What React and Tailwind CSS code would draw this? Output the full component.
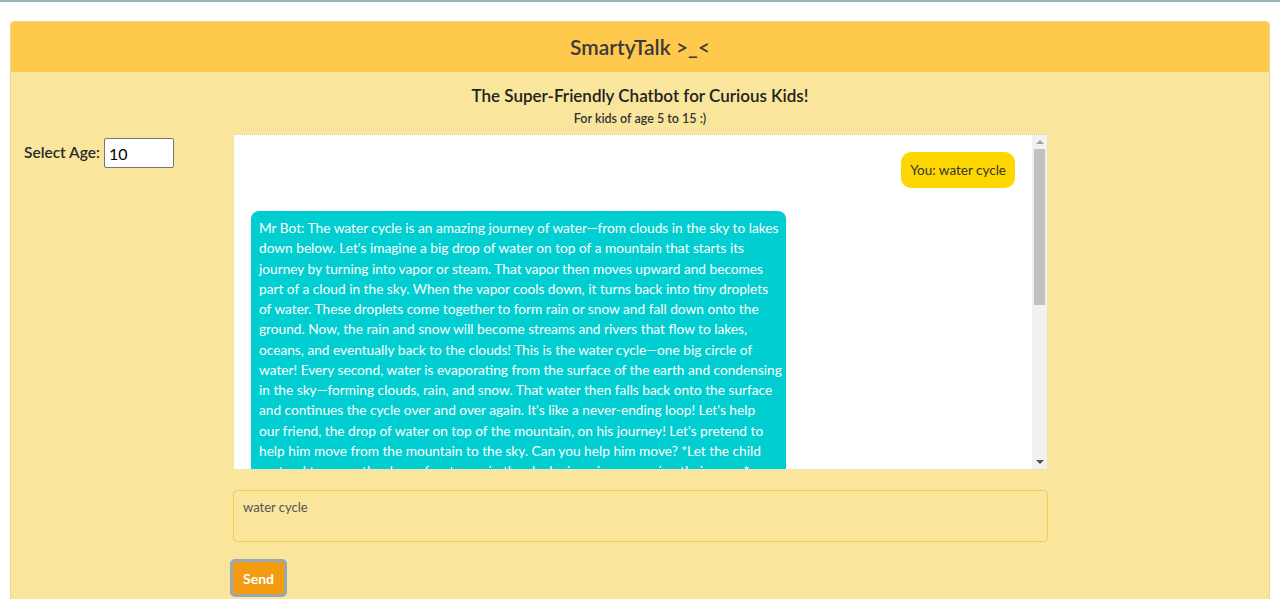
import { useState } from "react";

const botLines = [
  "Mr Bot: The water cycle is an amazing journey of water—from clouds in the sky to lakes",
  "down below. Let's imagine a big drop of water on top of a mountain that starts its",
  "journey by turning into vapor or steam. That vapor then moves upward and becomes",
  "part of a cloud in the sky. When the vapor cools down, it turns back into tiny droplets",
  "of water. These droplets come together to form rain or snow and fall down onto the",
  "ground. Now, the rain and snow will become streams and rivers that flow to lakes,",
  "oceans, and eventually back to the clouds! This is the water cycle—one big circle of",
  "water! Every second, water is evaporating from the surface of the earth and condensing",
  "in the sky—forming clouds, rain, and snow. That water then falls back onto the surface",
  "and continues the cycle over and over again. It's like a never-ending loop! Let's help",
  "our friend, the drop of water on top of the mountain, on his journey! Let's pretend to",
  "help him move from the mountain to the sky. Can you help him move? *Let the child",
  "pretend to move the drop of water up in the sky by jumping or waving their arms.*",
  "Great job! Now the drop is a cloud. What do you think happens next?",
];

function App() {
  const [age, setAge] = useState("10");
  const [message, setMessage] = useState("water cycle");

  return (
    <div className="min-h-screen bg-white text-[#333]" style={{ fontFamily: "Lato, 'Noto Sans', sans-serif" }}>
      {/* top line */}
      <div className="h-[2px] bg-[#9fb3bd]" />

      <div className="mx-[10px] mt-[19px] rounded-t-[4px] border border-[#ecd894] bg-[#f9e59c]">
        {/* Header */}
        <div className="h-[50px] flex items-center justify-center bg-[#ffc94d] rounded-t-[3px]">
          <h1 className="text-[21px] font-semibold text-[#3a3a3a]">SmartyTalk &gt;_&lt;</h1>
        </div>

        {/* Titles */}
        <div className="text-center pt-[13px]">
          <h2 className="text-[17px] font-semibold text-[#222] leading-[22px]">The Super-Friendly Chatbot for Curious Kids!</h2>
          <p className="text-[12.5px] font-semibold text-[#333] mt-[3px] leading-[17px]">For kids of age 5 to 15 :)</p>
        </div>

        <div className="flex mt-[7px] pb-[6px]">
          {/* Left column */}
          <div className="w-[222px] pl-[13px] pt-[4px]">
            <label className="flex items-center gap-[4px] text-[15.5px] font-semibold text-[#2a2a2a]">
              Select Age:
              <input
                type="number"
                value={age}
                onChange={(e) => setAge(e.target.value)}
                className="w-[70px] h-[30px] bg-white border border-[#767676] rounded-[2px] px-[4px] text-[16px] font-normal text-black outline-none [appearance:textfield]"
              />
            </label>
          </div>

          {/* Chat column */}
          <div className="w-[815px]">
            <div className="h-[336px] flex bg-white border border-dotted border-[#e6c56a] rounded-[3px] overflow-hidden">
              <div className="flex-1 overflow-hidden px-[17px] pt-[17px]">
                <div className="flex justify-end">
                  <div className="bg-[#ffd700] rounded-[10px] px-[9px] py-[8px] text-[13.5px] leading-[20px] text-[#333]">
                    You: water cycle
                  </div>
                </div>
                <div className="mt-[23px] w-[535px] bg-[#00ced1] rounded-[8px] px-[8px] py-[7px] text-white text-[13.7px] leading-[20.25px]">
                  {botLines.map((line, i) => (
                    <div key={i} className="whitespace-nowrap">{line}</div>
                  ))}
                </div>
              </div>

              {/* scrollbar */}
              <div className="w-[15px] flex flex-col bg-[#f1f1f1]">
                <div className="h-[14px] flex items-center justify-center">
                  <div className="w-0 h-0 border-l-[4px] border-r-[4px] border-b-[4px] border-l-transparent border-r-transparent border-b-[#a3a3a3]" />
                </div>
                <div className="mx-[2px] h-[156px] bg-[#c1c1c1]" />
                <div className="flex-1" />
                <div className="h-[14px] flex items-center justify-center">
                  <div className="w-0 h-0 border-l-[4px] border-r-[4px] border-t-[4px] border-l-transparent border-r-transparent border-t-[#505050]" />
                </div>
              </div>
            </div>

            {/* message box */}
            <textarea
              value={message}
              onChange={(e) => setMessage(e.target.value)}
              className="mt-[20px] block w-[815px] h-[52px] resize-none bg-[#f9e59c] border border-[#f3cb55] rounded-[4px] px-[9px] py-[7px] text-[13px] text-[#555] outline-none"
            />

            <button className="mt-[17px] -ml-[3px] h-[38px] px-[10px] bg-[#f39c12] text-white text-[14px] font-bold rounded-[5px] border-[3px] border-[#97a8b0]">
              Send
            </button>
          </div>
        </div>
      </div>
    </div>
  );
}

export default App;
